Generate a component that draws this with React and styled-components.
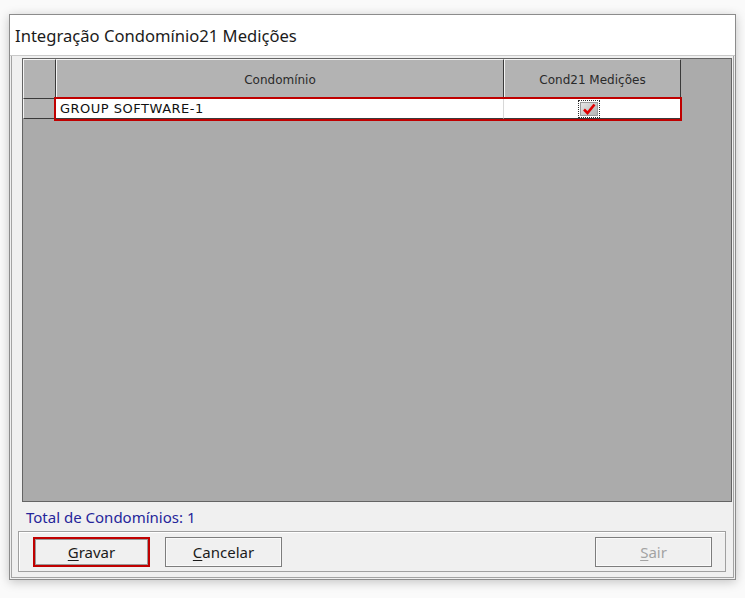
import React from "react";
import styled, { createGlobalStyle } from "styled-components";

const GlobalStyle = createGlobalStyle`
  html, body {
    margin: 0;
    padding: 0;
    background: #fafafa;
  }
  body {
    font-family: "Noto Sans", "DejaVu Sans", sans-serif;
  }
`;

const Page = styled.div`
  width: 745px;
  height: 598px;
  padding: 14px 0 0 9px;
  box-sizing: border-box;
`;

const Window = styled.div`
  width: 727px;
  height: 566px;
  box-sizing: border-box;
  border: 1px solid #8c8c8c;
  background: #f0f0f0;
  box-shadow: 0 2px 10px rgba(0, 0, 0, 0.22);
  display: flex;
  flex-direction: column;
`;

const TitleBar = styled.div`
  height: 40px;
  background: #ffffff;
  display: flex;
  align-items: center;
  padding-left: 5px;
  font-family: "Noto Sans", sans-serif;
  font-size: 16.6px;
  color: #1b1b1b;
  border-bottom: 1px solid #c9c9c9;
`;

const Client = styled.div`
  flex: 1;
  margin: 0 1px 1px;
  border: 1px solid #a3a3a3;
  border-top: none;
  display: flex;
  flex-direction: column;
  padding: 2px 1px 5px 10px;
`;

const Grid = styled.div`
  height: 444px;
  box-sizing: border-box;
  border: 1px solid #646464;
  background: #ababab;
  display: flex;
  flex-direction: column;
`;

const Row = styled.div`
  display: flex;
`;

const HeadCell = styled.div`
  width: ${(p) => p.$w}px;
  height: 40px;
  box-sizing: border-box;
  border-top: 1px solid #f4f4f4;
  border-left: 1px solid #f4f4f4;
  border-right: 1px solid #3a3a3a;
  border-bottom: 1px solid #3a3a3a;
  background: #b3b3b3;
  display: flex;
  align-items: center;
  justify-content: center;
  font-family: "DejaVu Sans", sans-serif;
  font-size: 12px;
  color: #2a2a2a;
  padding-top: 1px;
`;

const IndicatorCell = styled.div`
  width: 33px;
  height: 20px;
  box-sizing: border-box;
  border-left: 1px solid #f4f4f4;
  border-right: 1px solid #6a6a6a;
  border-bottom: 1px solid #3a3a3a;
  background: #b3b3b3;
`;

const SelectedCells = styled.div`
  display: flex;
  outline: 2px solid #c00000;
  outline-offset: 0;
  position: relative;
  z-index: 1;
`;

const DataCell = styled.div`
  width: ${(p) => p.$w}px;
  height: 20px;
  box-sizing: border-box;
  background: #ffffff;
  border-right: ${(p) => (p.$sep ? "1px solid #d8d8d8" : "none")};
  border-bottom: 1px solid #3a3a3a;
  display: flex;
  align-items: center;
  justify-content: ${(p) => (p.$center ? "center" : "flex-start")};
  padding-left: ${(p) => (p.$center ? 0 : 4)}px;
  font-family: "DejaVu Sans", sans-serif;
  font-size: 13px;
  letter-spacing: 0.5px;
  color: #111;
`;

const CheckFocus = styled.div`
  width: 22px;
  height: 18px;
  box-sizing: border-box;
  border: 1px dotted #2a2a2a;
  padding: 1px;
  display: flex;
  margin-right: 6px;
`;

const CheckBox = styled.div`
  flex: 1;
  background: linear-gradient(135deg, #e6e6e6 0%, #c6c6c6 60%, #b4b4b4 100%);
  border: 1px solid #9a9a9a;
  display: flex;
  align-items: center;
  justify-content: center;
`;

const TotalLabel = styled.div`
  height: 29px;
  display: flex;
  align-items: center;
  padding-left: 4px;
  font-family: "Noto Sans", sans-serif;
  font-size: 15px;
  color: #25259a;
`;

const ButtonPanel = styled.div`
  margin: 0 6px 0 -4px;
  height: 41px;
  box-sizing: border-box;
  border: 1px solid #a0a0a0;
  box-shadow: inset 1px 1px 0 #ffffff;
  display: flex;
  align-items: center;
  padding: 0 13px 0 14px;
  gap: 15px;
`;

const Button = styled.button`
  width: 117px;
  height: 30px;
  box-sizing: border-box;
  border: ${(p) => (p.$focus ? "2px solid #c00000" : "1px solid #7d7d7d")};
  box-shadow: inset 0 0 0 1px ${(p) => (p.$focus ? "#9a9a9a" : "#fafafa")};
  background: #f0f0f0;
  font-family: "Noto Sans", sans-serif;
  font-size: 15px;
  color: ${(p) => (p.disabled ? "#a3a3a3" : "#1b1b1b")};
  padding: 0;
  margin-left: ${(p) => (p.$right ? "auto" : "0")};

  u {
    text-decoration-thickness: 1px;
    text-underline-offset: 2px;
  }
`;

function Check() {
  return (
    <svg width="14" height="12" viewBox="0 0 14 12">
      <path d="M2 6.5 L5.5 10 L12.5 1.5" fill="none" stroke="#e00000" strokeWidth="2.6" />
    </svg>
  );
}

export default function App() {
  return (
    <Page>
      <GlobalStyle />
      <Window>
        <TitleBar>Integração Condomínio21 Medições</TitleBar>
        <Client>
          <Grid>
            <Row>
              <HeadCell $w={33} />
              <HeadCell $w={448}>Condomínio</HeadCell>
              <HeadCell $w={177}>Cond21 Medições</HeadCell>
            </Row>
            <Row>
              <IndicatorCell />
              <SelectedCells>
                <DataCell $w={448} $sep>GROUP SOFTWARE-1</DataCell>
                <DataCell $w={176} $center>
                  <CheckFocus>
                    <CheckBox>
                      <Check />
                    </CheckBox>
                  </CheckFocus>
                </DataCell>
              </SelectedCells>
            </Row>
          </Grid>
          <TotalLabel>Total de Condomínios: 1</TotalLabel>
          <ButtonPanel>
            <Button $focus>
              <u>G</u>ravar
            </Button>
            <Button>
              <u>C</u>ancelar
            </Button>
            <Button $right disabled>
              <u>S</u>air
            </Button>
          </ButtonPanel>
        </Client>
      </Window>
    </Page>
  );
}
